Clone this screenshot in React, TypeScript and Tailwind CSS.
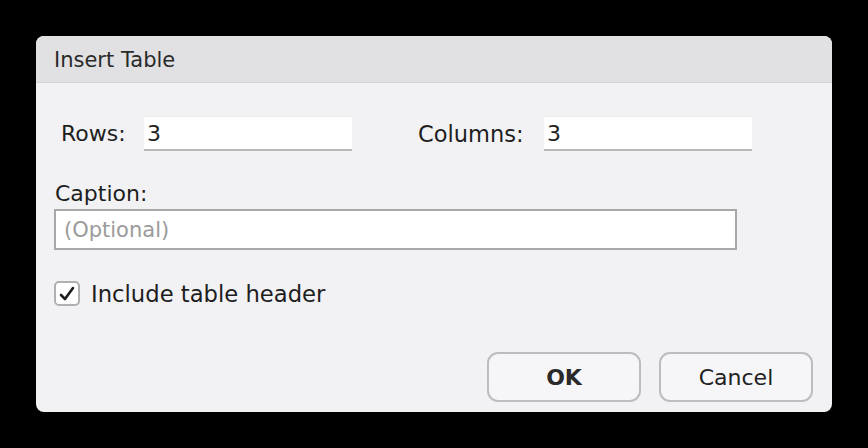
import React from "react";

export default function App() {
  const font = { fontFamily: '"DejaVu Sans", "Liberation Sans", sans-serif' };
  return (
    <div className="w-[868px] h-[448px] bg-black p-[36px]" style={font}>
      <div className="w-[796px] h-[376px] rounded-[8px] overflow-hidden bg-[#f2f2f4] flex flex-col">
        <div className="h-[47px] shrink-0 bg-[#e1e1e3] border-b border-[#d4d4d6] flex items-center pl-[18px] pt-[3px] text-[21px] text-[#2a2a2a] leading-none">
          Insert Table
        </div>
        <div className="flex flex-col pl-[18px] pr-[19px] pt-[33px] text-[#1e1e1e]">
          <div className="flex items-center h-[35px]">
            <span className="ml-[7px] w-[83px] text-[22px] leading-[26px]">Rows:</span>
            <div className="w-[208px] h-[35px] bg-white border-t border-[#ececec] border-b-2 border-b-[#b8b8b8] flex items-center pl-[3px] text-[22px]">
              3
            </div>
            <span className="ml-[66px] w-[126px] text-[22.5px] leading-[26px]">Columns:</span>
            <div className="w-[208px] h-[35px] bg-white border-t border-[#ececec] border-b-2 border-b-[#b8b8b8] flex items-center pl-[3px] text-[22px]">
              3
            </div>
          </div>
          <div className="mt-[30px] h-[26px] text-[22px] leading-[26px] ml-[1px]">Caption:</div>
          <div className="mt-[2px] w-[683px] h-[41px] bg-white border-2 border-[#a8a8a8] flex items-center pl-[8px] pt-[2px] text-[21px] text-[#9b9b9b]">
            (Optional)
          </div>
          <div className="mt-[31px] flex items-center h-[25px]">
            <div className="w-[26px] h-[25px] rounded-[5px] border-2 border-[#b0b0b0] bg-white flex items-center justify-center">
              <svg width="18" height="16" viewBox="0 0 18 16">
                <path d="M3 9 L7 13 L15 2" fill="none" stroke="#1e1e1e" strokeWidth="2.6" strokeLinecap="round" strokeLinejoin="round" />
              </svg>
            </div>
            <span className="ml-[11px] text-[22.7px] leading-[26px]">Include table header</span>
          </div>
          <div className="mt-[46px] flex justify-end gap-[18px]">
            <button className="w-[154px] h-[50px] rounded-[11px] border-2 border-[#bdbdbf] bg-[#f6f6f8] text-[22px] font-bold text-[#2a2a2a]">
              OK
            </button>
            <button className="w-[154px] h-[50px] rounded-[11px] border-2 border-[#bdbdbf] bg-[#f6f6f8] text-[22px] text-[#222]">
              Cancel
            </button>
          </div>
        </div>
      </div>
    </div>
  );
}
